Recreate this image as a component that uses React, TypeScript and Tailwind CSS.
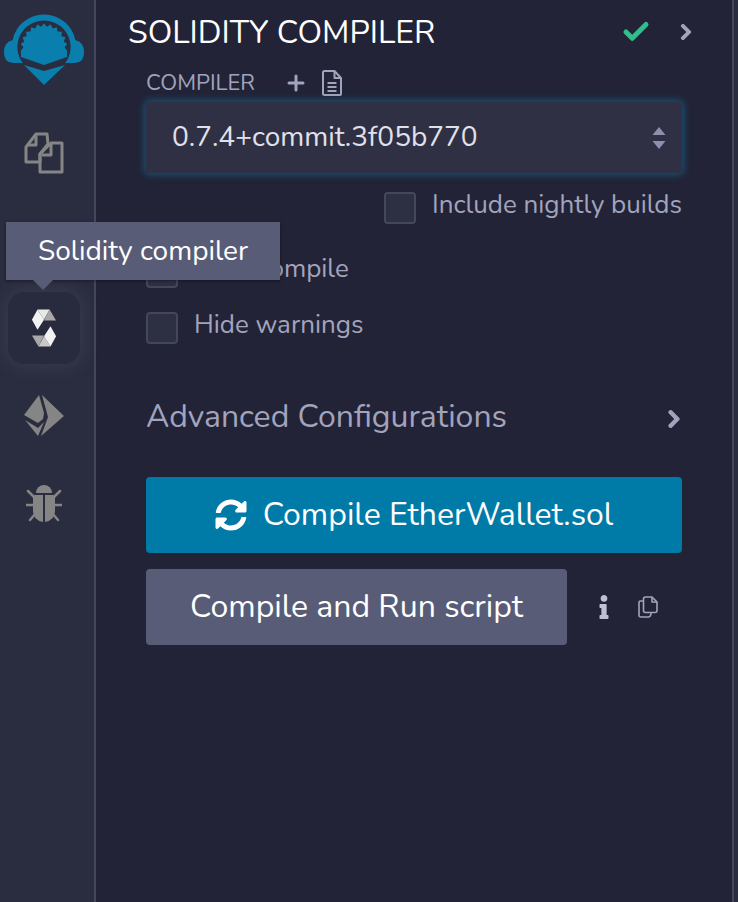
import React from 'react';
import { Check, Plus } from 'lucide-react';
import { FaChevronRight, FaInfo, FaSyncAlt } from 'react-icons/fa';

const font = { fontFamily: '"Nunito", "Open Sans", "Noto Sans", sans-serif' };

const sunPoints = Array.from({ length: 25 }, (_, i) => {
  const a = Math.PI * 0.95 + (i * Math.PI * 1.1) / 24;
  const r = i % 2 === 0 ? 23.5 : 20.5;
  return `${(43 + r * Math.cos(a)).toFixed(1)},${(33 + r * Math.sin(a)).toFixed(1)}`;
}).join(' ');

const Logo = () => (
  <svg width="86" height="72" viewBox="0 0 86 72">
    <path d="M14 46 A32 32 0 1 1 72 46 L65 48 L21 48 Z" fill="#0a7fae" />
    <path d="M12 26 Q3 28 3 38 Q3 49 13 49 L22 49 L14 30 Z" fill="#0a7fae" />
    <path d="M74 26 Q83 28 83 38 Q83 49 73 49 L64 49 L72 30 Z" fill="#0a7fae" />
    <path d="M21 48 A26.6 26.6 0 1 1 65 48 L43 56 Z" fill="#2a2c3f" />
    <polygon points={`${sunPoints} 66,43 43,51 20,43`} fill="#0a7fae" />
    <path d="M23 51 L43 57 L64 51 L43 71 Z" fill="#0a7fae" />
  </svg>
);

const FilesIcon = () => (
  <svg width="42" height="42" viewBox="0 0 42 42" fill="none" stroke="#858585" strokeWidth="3" strokeLinejoin="round">
    <path d="M3 15 L13 2 L24 2 L25 12 L17 22 L17 30 L3 30 Z" />
    <path d="M17 22 L28 11 L39 11 L39 40 L17 40 Z" />
    <path d="M13 2 L13 13 L5 13" />
    <path d="M28 11 L28 23 L19 23" />
  </svg>
);

const SolidityIcon = () => (
  <svg width="26" height="40" viewBox="0 0 28 42">
    <path d="M7 1 L20 1 L14 12 Z" fill="#e8e8e8" />
    <path d="M20 1 L27 13 L14 13 Z" fill="#a8a8a8" />
    <path d="M7 1 L1 12 L7 23 L14 12 Z" fill="#f2f2f2" />
    <path d="M21 41 L8 41 L14 30 Z" fill="#c8c8c8" />
    <path d="M8 41 L1 29 L14 29 Z" fill="#a8a8a8" />
    <path d="M21 41 L27 30 L21 19 L14 30 Z" fill="#f2f2f2" />
  </svg>
);

const EthIcon = () => (
  <svg width="40" height="42" viewBox="0 0 40 42" fill="#858585">
    <path d="M15 0 L0 20 L14 28 L19 24 L20 18 Z" />
    <path d="M1 25 L14 33 L20 27 L14 41 Z" />
    <path d="M18 0 L40 21 L17 41 L24 22 Z" />
  </svg>
);

const BugIcon = () => (
  <svg width="36" height="38" viewBox="0 0 36 38" fill="#858585" stroke="none">
    <path d="M10 8 A8 8 0 0 1 26 8 Z" />
    <path d="M7 10 L17 10 L17 37 Q7 35 7 26 Z" />
    <path d="M29 10 L19 10 L19 37 Q29 35 29 26 Z" />
    <path d="M2 6 L9 13 M0 20 L9 20 M4 35 L10 28 M34 6 L27 13 M36 20 L27 20 M32 35 L26 28" stroke="#858585" strokeWidth="2.5" strokeLinecap="round" />
  </svg>
);

const SelectArrows = () => (
  <svg width="14" height="24" viewBox="0 0 14 24" fill="#8e8fae">
    <path d="M7 1 L13.5 9 L0.5 9 Z" />
    <path d="M7 23 L13.5 15 L0.5 15 Z" />
  </svg>
);

const FileIcon = () => (
  <svg width="20" height="26" viewBox="0 0 20 26" fill="none" stroke="#a2a3bd" strokeWidth="2" strokeLinejoin="round">
    <path d="M2.5 1 L12.5 1 L19 8 L19 24 Q19 25 18 25 L2.5 25 Q1 25 1 24 L1 2.5 Q1 1 2.5 1 Z" />
    <path d="M12.5 1 L12.5 8 L19 8" />
    <path d="M5.5 13 L14.5 13 M5.5 17 L14.5 17 M5.5 21 L14.5 21" strokeWidth="1.8" />
  </svg>
);

const CopyIcon = () => (
  <svg width="20" height="22" viewBox="0 0 20 22" fill="none" stroke="#a2a3bd" strokeWidth="1.6" strokeLinejoin="round">
    <path d="M6 5 L2.5 5 Q1 5 1 6.5 L1 19 Q1 21 3 21 L10 21 Q13 21 13 17" />
    <path d="M7.5 1 L14 1 L19 6 L19 14.5 Q19 16.5 17 16.5 L7.5 16.5 Q5.5 16.5 5.5 14.5 L5.5 3 Q5.5 1 7.5 1 Z" />
    <path d="M14 1 L14 6 L19 6" />
  </svg>
);

const Box = () => <span className="block w-8 h-8 shrink-0 rounded-[4px] border-2 border-[#44465e] bg-[#2d2f43]" />;

const App: React.FC = () => {
  return (
    <div className="relative flex w-[738px] h-[902px] overflow-hidden bg-[#222336]" style={font}>
      {/* sidebar */}
      <div className="w-[96px] shrink-0 h-full flex flex-col items-center bg-[#2a2c3f] border-r-2 border-[#44465e] pr-[6px]">
        <div className="mt-[14px]"><Logo /></div>
        <div className="mt-[46px]"><FilesIcon /></div>
        <div className="mt-[118px] w-[72px] h-[72px] rounded-[16px] bg-[#282a3d] flex items-center justify-center shadow-[0_0_20px_rgba(120,122,150,0.25)]">
          <SolidityIcon />
        </div>
        <div className="mt-[31px]"><EthIcon /></div>
        <div className="mt-[48px]"><BugIcon /></div>
      </div>

      {/* main panel */}
      <div className="flex-1 flex flex-col">
        <div className="flex items-center h-[64px] pl-[32px] pr-[37px]">
          <span className="text-[32px] text-white leading-none pt-px">SOLIDITY COMPILER</span>
          <Check className="ml-auto text-[#2fbf8c]" size={30} strokeWidth={4} />
          <FaChevronRight className="ml-[26px] text-[#a2a3bd]" size={18} stroke="currentColor" strokeWidth={30} />
        </div>

        <div className="pl-[50px] w-[586px] flex flex-col">
          <div className="flex items-center h-[38px] text-[#a2a3bd]">
            <span className="text-[22px] leading-none">COMPILER</span>
            <Plus className="ml-[29px]" size={24} strokeWidth={3} />
            <span className="ml-[14px]"><FileIcon /></span>
          </div>

          <div className="h-[71px] rounded-[4px] bg-[#2f3044] flex items-center justify-between pl-[26px] pr-[16px] shadow-[0_0_7px_2px_rgba(20,120,170,0.55)]">
            <span className="text-[28px] text-[#e0e1ea] leading-none pb-px">0.7.4+commit.3f05b770</span>
            <SelectArrows />
          </div>

          <div className="flex items-center justify-end gap-4 mt-[19px] text-[26px] text-[#a2a3bd] leading-none">
            <Box />
            <span className="pb-[6px]">Include nightly builds</span>
          </div>

          <div className="flex items-center gap-4 mt-[32px] text-[26px] text-[#a2a3bd] leading-none">
            <Box />
            <span className="pb-[6px]">Auto compile</span>
          </div>

          <div className="flex items-center gap-4 mt-[24px] text-[26px] text-[#a2a3bd] leading-none">
            <Box />
            <span className="pb-[6px]">Hide warnings</span>
          </div>

          <div className="flex items-center justify-between mt-[54px] h-[38px] text-[#a2a3bd]">
            <span className="text-[32px] leading-none">Advanced Configurations</span>
            <FaChevronRight className="-mr-[2px] mt-[4px]" size={20} stroke="currentColor" strokeWidth={30} />
          </div>

          <button className="mt-[41px] h-[76px] rounded-[4px] bg-[#007aa6] text-white flex items-center justify-center gap-4 text-[32px] leading-none">
            <FaSyncAlt size={32} />
            <span>Compile EtherWallet.sol</span>
          </button>

          <div className="flex items-center mt-[16px]">
            <button className="w-[421px] h-[76px] rounded-[4px] bg-[#595c76] text-white text-[32px] leading-none">
              Compile and Run script
            </button>
            <FaInfo className="ml-[25px] text-[#bfc0d2]" size={24} />
            <span className="ml-[22px]"><CopyIcon /></span>
          </div>
        </div>
      </div>

      {/* right edge */}
      <div className="w-[6px] shrink-0 h-full bg-[#2a2c3f] border-l-2 border-[#44465e]" />

      {/* tooltip */}
      <div className="absolute left-[6px] top-[222px] w-[274px] h-[58px] bg-[#595c76] text-white text-[28px] leading-none flex items-center justify-center shadow-[0_1px_3px_rgba(0,0,0,0.4)]">
        Solidity compiler
        <span className="absolute left-[27px] top-full border-x-[10px] border-x-transparent border-t-[10px] border-t-[#595c76]" />
      </div>
    </div>
  );
};

export default App;
